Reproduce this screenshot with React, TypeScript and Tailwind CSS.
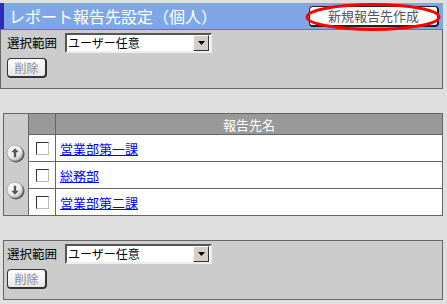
import React from "react";

const font = { fontFamily: '"Noto Sans CJK JP", "Noto Sans", sans-serif' };

function ScopeSelect() {
  return (
    <div className="flex items-center gap-[8px]">
      <span className="text-[12.5px] leading-none text-black">選択範囲</span>
      <div className="flex h-[20px] w-[147px] items-center justify-between border-2 border-t-[#555] border-l-[#555] border-b-[#eee] border-r-[#eee] bg-white pl-[1px] pr-[1px]">
        <span className="text-[12px] leading-none text-black">ユーザー任意</span>
        <div className="flex h-[16px] w-[16px] items-center justify-center border border-t-[#fff] border-l-[#fff] border-b-[#333] border-r-[#333] bg-[#d4d0c8]">
          <svg width="7" height="4" viewBox="0 0 7 4">
            <path d="M0 0h7L3.5 4z" fill="#000" />
          </svg>
        </div>
      </div>
    </div>
  );
}

function DeleteButton() {
  return (
    <button className="flex h-[20px] w-[40px] items-center justify-center rounded-[4px] border border-[#333] border-r-2 border-b-2 bg-gradient-to-b from-white to-[#e6e6e6] text-[12px] leading-none text-[#888]">
      削除
    </button>
  );
}

function ScopePanel({ className = "" }: { className?: string }) {
  return (
    <div className={`flex h-[60px] flex-col gap-[5px] border border-[#666] bg-[#cccccc] pt-[3px] ${className}`}>
      <ScopeSelect />
      <DeleteButton />
    </div>
  );
}

function RoundArrow({ down }: { down?: boolean }) {
  return (
    <svg width="19" height="19" viewBox="0 0 19 19">
      <defs>
        <radialGradient id={down ? "gd" : "gu"} cx="40%" cy="35%" r="65%">
          <stop offset="0%" stopColor="#ffffff" />
          <stop offset="70%" stopColor="#e8e8e8" />
          <stop offset="100%" stopColor="#b0b0b0" />
        </radialGradient>
      </defs>
      <circle cx="10" cy="10" r="8.5" fill="#555" />
      <circle cx="9" cy="9" r="8" fill={`url(#${down ? "gd" : "gu"})`} stroke="#999" strokeWidth="0.6" />
      <g transform={down ? "rotate(180 9 9)" : undefined}>
        <path d="M9 4.2L5.2 8.2h2.6v5h2.4v-5h2.6z" fill="#555" />
      </g>
    </svg>
  );
}

const rows = ["営業部第一課", "総務部", "営業部第二課"];

export default function App() {
  return (
    <div className="h-[304px] w-[447px] bg-[#dfdfdf] pt-[3px]" style={font}>
      <div className="w-[443px]">
        <div className="relative flex h-[26px] items-center justify-between border-l-4 border-[#2c2cb4] bg-[#7fa7e7] pl-[5px] pr-[4px]">
          <span className="text-[16px] leading-none text-white">レポート報告先設定（個人）</span>
          <button className="flex h-[21px] w-[130px] items-center justify-center rounded-[4px] border border-[#222] border-r-2 border-b-2 bg-white text-[13px] leading-none text-[#555]">
            新規報告先作成
          </button>
          <svg className="pointer-events-none absolute right-[1px] top-[-1px]" width="138" height="30" viewBox="0 0 138 30">
            <ellipse cx="69" cy="15" rx="66" ry="12.5" fill="none" stroke="#ff0000" strokeWidth="3" />
          </svg>
        </div>
        <ScopePanel className="border-t-[#777] px-[6px]" />
      </div>

      <div className="ml-[3px] mt-[24px] flex w-[440px] border border-[#666]">
        <div className="flex w-[25px] flex-col items-center gap-[18px] border-r border-[#666] bg-[#cccccc] pt-[30px] pr-[1px]">
          <RoundArrow />
          <RoundArrow down />
        </div>
        <div className="flex flex-1 flex-col">
          <div className="flex h-[20px] bg-[#999999]">
            <div className="w-[27px] border-r border-[#666]" />
            <div className="flex flex-1 items-center justify-center text-[13px] leading-none text-white">報告先名</div>
          </div>
          {rows.map((name) => (
            <div key={name} className="flex h-[27px] border-t border-[#666] bg-white">
              <div className="flex w-[27px] items-center justify-center border-r border-[#666]">
                <span className="block h-[13px] w-[13px] border border-t-[#333] border-l-[#333] border-b-[#bbb] border-r-[#bbb] bg-white" />
              </div>
              <div className="flex flex-1 items-center pl-[4px]">
                <a href="#" className="text-[13px] leading-none text-[#0000ff] underline">
                  {name}
                </a>
              </div>
            </div>
          ))}
        </div>
      </div>

      <ScopePanel className="ml-[3px] mt-[24px] w-[440px] px-[3px]" />
    </div>
  );
}
